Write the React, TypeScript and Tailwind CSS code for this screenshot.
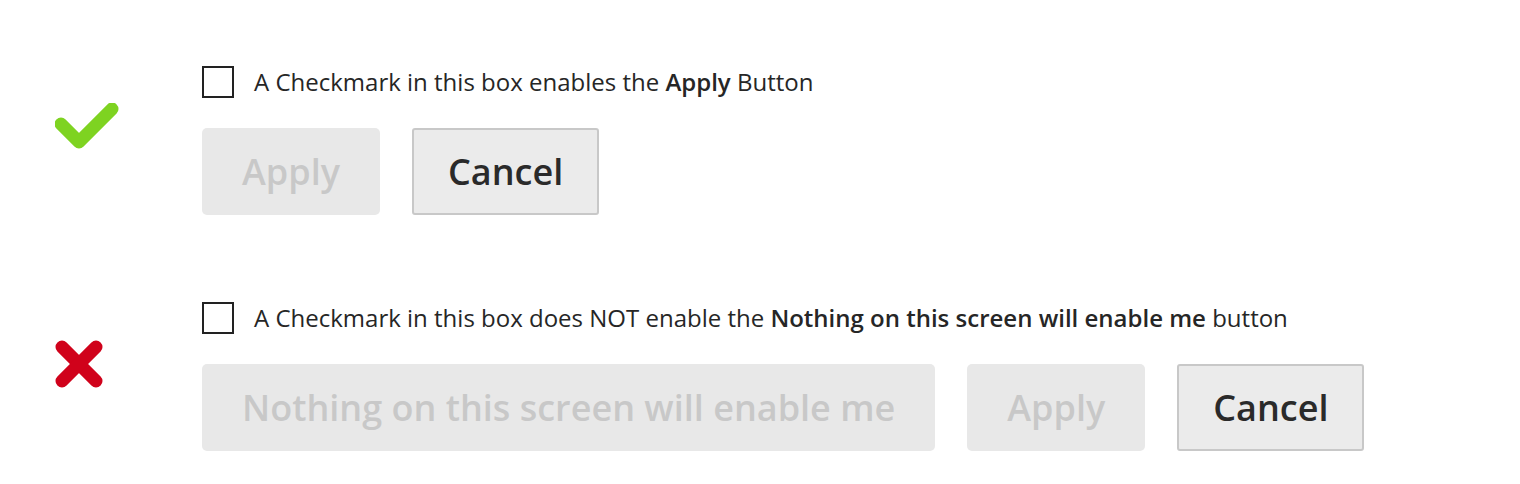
import React from "react";

const font = { fontFamily: '"Open Sans", "Noto Sans", sans-serif' };

function GreenCheck() {
  return (
    <svg width="64" height="50" viewBox="0 0 64 50" className="block">
      <polyline
        points="6,21 24,39 57,6"
        fill="none"
        stroke="#7ed321"
        strokeWidth="13"
        strokeLinejoin="round"
        strokeLinecap="round"
      />
    </svg>
  );
}

function RedCross() {
  return (
    <svg width="48" height="48" viewBox="0 0 48 48" className="block">
      <g stroke="#d0021b" strokeWidth="13" strokeLinecap="round">
        <line x1="7" y1="7" x2="41" y2="41" />
        <line x1="41" y1="7" x2="7" y2="41" />
      </g>
    </svg>
  );
}

function Checkbox() {
  return <span className="block w-8 h-8 border-2 border-[#222222] bg-white shrink-0" />;
}

function DisabledButton({ children }: { children: React.ReactNode }) {
  return (
    <button
      disabled
      className="h-[87px] px-10 rounded-[5px] bg-[#e8e8e8] text-[#c8c8c8] text-[36px] font-semibold leading-none cursor-not-allowed"
    >
      {children}
    </button>
  );
}

function CancelButton() {
  return (
    <button className="h-[87px] px-[34px] rounded-[3px] border-2 border-[#c8c8c8] bg-[#ebebeb] text-[#2a2a2a] text-[36px] font-semibold leading-none">
      Cancel
    </button>
  );
}

export default function App() {
  return (
    <div className="min-h-screen bg-white pt-[66px] pl-[55px]" style={font}>
      {/* Good example */}
      <div className="flex">
        <div className="w-[147px] pt-[37px]">
          <GreenCheck />
        </div>
        <div className="flex flex-col gap-[30px]">
          <label className="flex items-center gap-5 text-[24px] leading-8 text-[#262626]">
            <Checkbox />
            <span>
              A Checkmark in this box enables the <b className="font-semibold">Apply</b> Button
            </span>
          </label>
          <div className="flex gap-8">
            <DisabledButton>Apply</DisabledButton>
            <CancelButton />
          </div>
        </div>
      </div>

      {/* Bad example */}
      <div className="flex mt-[87px]">
        <div className="w-[147px] pt-[38px]">
          <RedCross />
        </div>
        <div className="flex flex-col gap-[30px]">
          <label className="flex items-center gap-5 text-[24px] leading-8 text-[#262626]">
            <Checkbox />
            <span>
              A Checkmark in this box does NOT enable the{" "}
              <b className="font-semibold">Nothing on this screen will enable me</b> button
            </span>
          </label>
          <div className="flex gap-8">
            <DisabledButton>Nothing on this screen will enable me</DisabledButton>
            <DisabledButton>Apply</DisabledButton>
            <CancelButton />
          </div>
        </div>
      </div>
    </div>
  );
}
